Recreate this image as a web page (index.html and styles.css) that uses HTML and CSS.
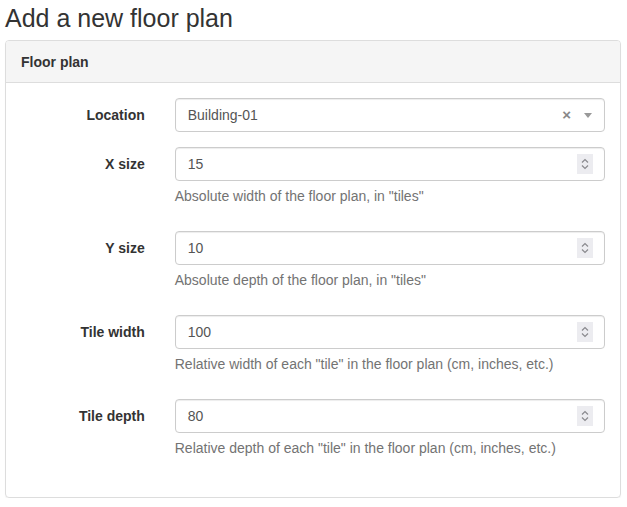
FILE: index.html
```html
<!DOCTYPE html>
<html>
<head>
<meta charset="utf-8">
<link rel="stylesheet" href="styles.css">
</head>
<body>
<div class="page">
  <h1 class="title">Add a new floor plan</h1>
  <div class="panel">
    <div class="panel-heading">Floor plan</div>
    <div class="panel-body">
      <div class="group">
        <label class="label">Location</label>
        <div class="field">
          <div class="input select">
            <span class="value">Building-01</span>
            <span class="clear">×</span>
            <span class="arrow"></span>
          </div>
        </div>
      </div>
      <div class="group">
        <label class="label">X size</label>
        <div class="field">
          <div class="input"><span class="value">15</span>
            <span class="spin"><svg width="16" height="20" viewBox="0 0 16 20"><path d="M5 8.5 L8 5.5 L11 8.5 M5 11.5 L8 14.5 L11 11.5" fill="none" stroke="#8a8a8e" stroke-width="1.2"/></svg></span>
          </div>
          <div class="help">Absolute width of the floor plan, in "tiles"</div>
        </div>
      </div>
      <div class="group">
        <label class="label">Y size</label>
        <div class="field">
          <div class="input"><span class="value">10</span>
            <span class="spin"><svg width="16" height="20" viewBox="0 0 16 20"><path d="M5 8.5 L8 5.5 L11 8.5 M5 11.5 L8 14.5 L11 11.5" fill="none" stroke="#8a8a8e" stroke-width="1.2"/></svg></span>
          </div>
          <div class="help">Absolute depth of the floor plan, in "tiles"</div>
        </div>
      </div>
      <div class="group">
        <label class="label">Tile width</label>
        <div class="field">
          <div class="input"><span class="value">100</span>
            <span class="spin"><svg width="16" height="20" viewBox="0 0 16 20"><path d="M5 8.5 L8 5.5 L11 8.5 M5 11.5 L8 14.5 L11 11.5" fill="none" stroke="#8a8a8e" stroke-width="1.2"/></svg></span>
          </div>
          <div class="help">Relative width of each "tile" in the floor plan (cm, inches, etc.)</div>
        </div>
      </div>
      <div class="group">
        <label class="label">Tile depth</label>
        <div class="field">
          <div class="input"><span class="value">80</span>
            <span class="spin"><svg width="16" height="20" viewBox="0 0 16 20"><path d="M5 8.5 L8 5.5 L11 8.5 M5 11.5 L8 14.5 L11 11.5" fill="none" stroke="#8a8a8e" stroke-width="1.2"/></svg></span>
          </div>
          <div class="help">Relative depth of each "tile" in the floor plan (cm, inches, etc.)</div>
        </div>
      </div>
    </div>
  </div>
</div>
</body>
</html>
```

FILE: styles.css
```css
* { box-sizing: border-box; }
html, body { margin: 0; padding: 0; background: #fff; }
body {
  font-family: "Liberation Sans", Arial, sans-serif;
  font-size: 14px;
  line-height: 20px;
  color: #333;
}
.page { padding: 0 6px 0 5px; }
.title {
  margin: 0;
  padding-top: 4px;
  height: 40px;
  font-size: 25px;
  line-height: 28px;
  font-weight: 500;
  color: #333;
}
.panel {
  border: 1px solid #ddd;
  border-radius: 4px;
  box-shadow: 0 1px 1px rgba(0,0,0,0.05);
}
.panel-heading {
  background: #f5f5f5;
  border-bottom: 1px solid #ddd;
  border-radius: 3px 3px 0 0;
  padding: 11px 15px 10px;
  font-weight: bold;
  color: #333;
}
.panel-body { padding: 15px 0 14px; }
.group {
  display: grid;
  grid-template-columns: 153.75px 1fr;
  margin-bottom: 15px;
}
.label {
  padding: 7px 15px 0;
  text-align: right;
  font-weight: bold;
  color: #333;
}
.field { padding: 0 15px; }
.input {
  height: 34px;
  border: 1px solid #ccc;
  border-radius: 4px;
  padding: 6px 12px;
  color: #555;
  display: flex;
  align-items: center;
  box-shadow: inset 0 1px 1px rgba(0,0,0,0.075);
}
.value { flex: 1; }
.select { padding-right: 10px; }
.clear {
  color: #888;
  font-size: 15px;
  font-weight: bold;
  margin-right: 13px;
}
.arrow {
  width: 0; height: 0;
  border-left: 4px solid transparent;
  border-right: 4px solid transparent;
  border-top: 5px solid #999;
  margin-right: 2px;
}
.spin {
  display: flex;
  background: #ececf0;
  width: 16px;
  height: 20px;
  margin-right: -1px;
}
.help {
  margin: 5px 0 10px;
  color: #737373;
}
```
